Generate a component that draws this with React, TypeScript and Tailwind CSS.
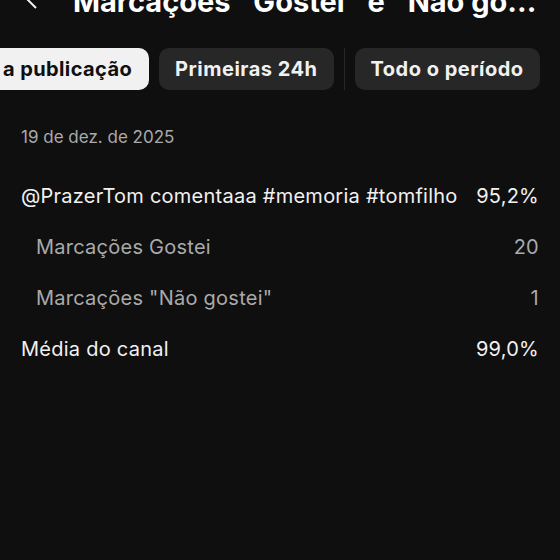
import React from 'react';

const rows = [
  { label: '@PrazerTom comentaaa #memoria #tomfilho', value: '95,2%', sub: false },
  { label: 'Marcações Gostei', value: '20', sub: true },
  { label: 'Marcações "Não gostei"', value: '1', sub: true },
  { label: 'Média do canal', value: '99,0%', sub: false },
];

const App: React.FC = () => {
  return (
    <div className="w-[560px] h-[560px] overflow-hidden bg-[#0f0f0f] text-white" style={{ fontFamily: 'Inter, "Noto Sans", sans-serif' }}>
      {/* Header, cortado no topo */}
      <div className="h-[30px] overflow-hidden relative">
        <div className="flex items-end h-[30px] -mt-[14px]">
          <svg width="12" height="20" viewBox="0 0 12 20" className="ml-[26px] mb-[6px] shrink-0">
            <path d="M10 2 L2 10 L10 18" stroke="#f1f1f1" strokeWidth="2" fill="none" />
          </svg>
          <div className="ml-[35px] text-[29px] leading-none font-bold whitespace-nowrap">
            Marcações "Gostei" e "Não go...
          </div>
        </div>
      </div>

      {/* Chips */}
      <div className="flex items-center mt-[18px] h-[42px]">
        <div className="-ml-[20px] h-[42px] pl-[23px] pr-[17px] flex items-center rounded-[10px] bg-[#f1f1f1] text-[#0f0f0f] text-[20px] font-bold tracking-[0.4px]">
          a publicação
        </div>
        <div className="ml-[10px] h-[42px] px-[16px] flex items-center rounded-[10px] bg-[#272727] text-[#f1f1f1] text-[20px] font-bold tracking-[0.5px]">
          Primeiras 24h
        </div>
        <div className="ml-[10px] w-px h-[42px] bg-[#272727]" />
        <div className="ml-[10px] h-[42px] px-[16px] flex items-center rounded-[10px] bg-[#272727] text-[#f1f1f1] text-[20px] font-bold tracking-[0.5px]">
          Todo o período
        </div>
      </div>

      {/* Conteúdo */}
      <div className="px-[21px] mt-[35px]">
        <div className="text-[17px] leading-[24px] text-[#aaaaaa]">19 de dez. de 2025</div>
        <div className="mt-[21px] flex flex-col tracking-[0.25px]">
          {rows.map((r) => (
            <div key={r.label} className="h-[51px] flex items-center justify-between">
              <span className={r.sub ? 'pl-[15px] text-[20px] text-[#aaaaaa]' : 'text-[20px] text-[#f1f1f1]'}>{r.label}</span>
              <span className={r.sub ? 'text-[20px] text-[#aaaaaa]' : 'text-[20px] text-[#f1f1f1]'}>{r.value}</span>
            </div>
          ))}
        </div>
      </div>
    </div>
  );
};

export default App;
